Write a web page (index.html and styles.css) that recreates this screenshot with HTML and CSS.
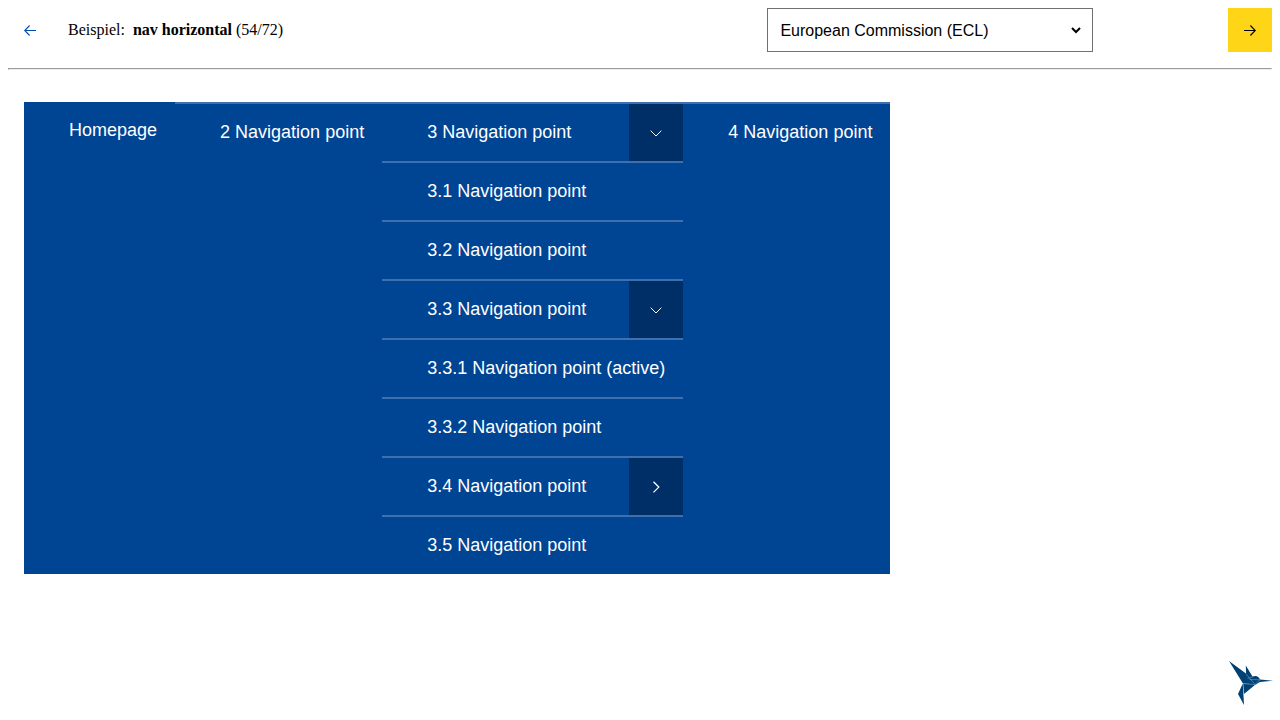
FILE: index.html
```
<!DOCTYPE html>
<html lang="en">
<head>
<meta charset="utf-8">
<meta name="viewport" content="width=device-width, initial-scale=1">
<title>nav horizontal</title>
<link rel="stylesheet" href="styles.css">
</head>
<body>
<header class="toolbar">
  <div class="toolbar-start">
    <button class="step step-prev" type="button" aria-label="Previous example">
      <svg width="12" height="12" viewBox="0 0 12 12" fill="none" stroke="currentColor" stroke-width="1.1" aria-hidden="true"><path d="M12 6.5H.8M5.6 1.500L.7 6.500l4.900 5"/></svg>
    </button>
    <div class="example">Beispiel:&nbsp; <strong>nav horizontal</strong> (54/72)</div>
  </div>
  <div class="theme">
    <select class="theme-select" aria-label="Theme">
      <option>European Commission (ECL)</option>
    </select>
  </div>
  <button class="step step-next" type="button" aria-label="Next example">
    <svg width="12" height="12" viewBox="0 0 12 12" fill="none" stroke="currentColor" stroke-width="1.1" aria-hidden="true"><path d="M0 6.5h11.200M6.400 1.500l4.900 5-4.900 5"/></svg>
  </button>
</header>
<hr class="divider">
<main class="content">
  <nav class="nav" aria-label="Main">
    <ul class="nav-list">
      <li class="nav-item"><a class="nav-link" href="#">Homepage</a></li>
      <li class="nav-item"><a class="nav-link" href="#">2 Navigation point</a></li>
      <li class="nav-item">
        <div class="nav-row">
          <a class="nav-link" href="#">3 Navigation point</a>
          <button class="toggle" type="button" aria-expanded="true" aria-label="Collapse 3 Navigation point"><svg class="chevron" viewBox="0 0 12 12" aria-hidden="true"><path d="M.7 3.700L6 9l5.300-5.300"/></svg></button>
        </div>
        <ul class="nav-sub">
          <li class="nav-item"><a class="nav-link" href="#">3.1 Navigation point</a></li>
          <li class="nav-item"><a class="nav-link" href="#">3.2 Navigation point</a></li>
          <li class="nav-item">
            <div class="nav-row">
              <a class="nav-link" href="#">3.3 Navigation point</a>
              <button class="toggle" type="button" aria-expanded="true" aria-label="Collapse 3.3 Navigation point"><svg class="chevron" viewBox="0 0 12 12" aria-hidden="true"><path d="M.7 3.700L6 9l5.300-5.300"/></svg></button>
            </div>
            <ul class="nav-sub">
              <li class="nav-item"><a class="nav-link" href="#" aria-current="page">3.3.1 Navigation point (active)</a></li>
              <li class="nav-item"><a class="nav-link" href="#">3.3.2 Navigation point</a></li>
            </ul>
          </li>
          <li class="nav-item">
            <div class="nav-row">
              <a class="nav-link" href="#">3.4 Navigation point</a>
              <button class="toggle" type="button" aria-expanded="false" aria-label="Expand 3.4 Navigation point"><svg class="chevron chevron-right" viewBox="0 0 12 12" aria-hidden="true"><path d="M3.500.8L8.800 6.100l-5.300 5.300"/></svg></button>
            </div>
          </li>
          <li class="nav-item"><a class="nav-link" href="#">3.5 Navigation point</a></li>
        </ul>
      </li>
      <li class="nav-item"><a class="nav-link" href="#">4 Navigation point</a></li>
    </ul>
  </nav>
</main>
<svg class="bird" viewBox="0 0 44 44" role="img" aria-label="Hummingbird logo">
  <path fill="#004175" d="M0 0L17 12.500 20 18 26 23.500 13.800 22.300zM16.800 4.500L23.500 15.500 26 15Q29.500 14.800 31 18.500L44 19.700 31 21 26 24 17.200 16zM14 22.500L26.500 23.500 15 33zM13.800 22.500L15 44 9 33z"/>
  <path fill="none" stroke="#9fb8cb" stroke-width=".45" d="M14 22.600L26 23.600M17 13L26 23.500M14.200 23L14.900 33M18.500 17.500L24 15.700M20.500 18.500L31 18.800M31 18.800L26 23.500"/>
</svg>
</body>
</html>
```
FILE: styles.css
```
body {
  margin: 8px;
  background: #fff;
  color: #000;
  font-family: "Liberation Serif", "Times New Roman", serif;
  font-size: 16px;
}

.toolbar {
  display: grid;
  grid-template-columns: 60% minmax(0, 328px) 1fr;
  align-items: center;
}

.toolbar-start {
  display: flex;
  align-items: center;
  gap: 16px;
}

.step {
  display: flex;
  align-items: center;
  justify-content: center;
  width: 44px;
  height: 44px;
  padding: 0;
  border: 0;
  cursor: pointer;
}

.step-prev {
  background: transparent;
  color: #004bb0;
}

.step-next {
  justify-self: end;
  background: #ffd617;
  color: #000;
}

.theme {
  margin: 0 1px;
  padding-right: 8px;
  border: 1px solid #707070;
  background: #fff;
}

.theme-select {
  display: block;
  width: 100%;
  height: 42px;
  padding: 0 8px;
  border: 0;
  border-radius: 0;
  background: transparent;
  color: #000;
  font: 16px "Liberation Sans", Arial, sans-serif;
}

.divider {
  margin: 16px 0 0;
}

.content {
  padding: 32px 16px;
}

.nav {
  width: max-content;
  background: #004494;
  color: #fff;
  font: 18px/21px "Liberation Sans", Arial, sans-serif;
}

.nav-list,
.nav-sub {
  margin: 0;
  padding: 0;
  list-style: none;
}

.nav-list {
  display: flex;
}

.nav-item {
  border-top: 2px solid #406fae;
}

.nav-list > .nav-item:first-child {
  border-top: 0;
}

.nav-row {
  display: flex;
  justify-content: space-between;
}

.nav-link {
  display: block;
  padding: 18px 18px 18px 45px;
  color: inherit;
  text-decoration: none;
}

.toggle {
  display: flex;
  align-items: center;
  justify-content: center;
  width: 54px;
  padding: 0;
  border: 0;
  background: #002f67;
  color: #fff;
  cursor: pointer;
}

.chevron {
  width: 12px;
  height: 12px;
  fill: none;
  stroke: currentColor;
  stroke-width: 1;
}

.chevron-right {
  stroke-width: 1.3;
}

.bird {
  position: fixed;
  right: 7px;
  bottom: 15px;
  width: 44px;
  height: 44px;
}
```
